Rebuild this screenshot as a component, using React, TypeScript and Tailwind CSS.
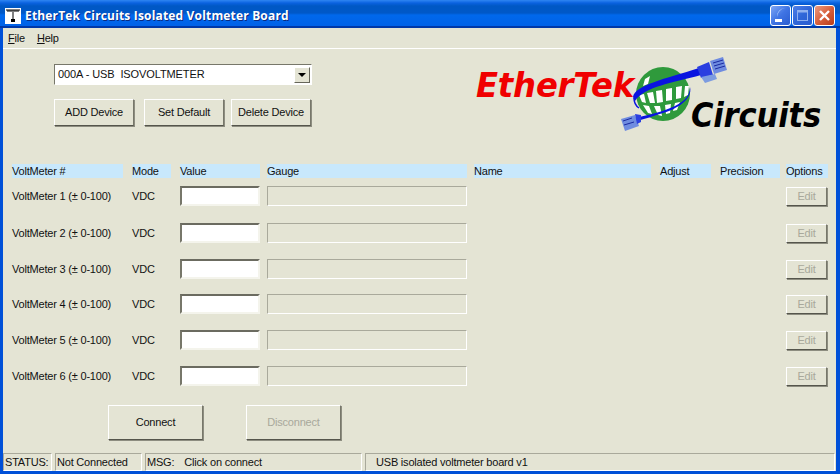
const uiFont = "font-['Liberation_Sans',Arial,sans-serif] text-[11px] tracking-[-0.2px] leading-none text-[#111]";

const headers = [
  { label: "VoltMeter #", cell: "w-[120px]", bar: "w-[111px]" },
  { label: "Mode", cell: "w-[48px]", bar: "w-[39px]" },
  { label: "Value", cell: "w-[87px]", bar: "w-[80px]" },
  { label: "Gauge", cell: "w-[207px]", bar: "w-[200px]" },
  { label: "Name", cell: "w-[186px]", bar: "w-[177px]" },
  { label: "Adjust", cell: "w-[60px]", bar: "w-[51px]" },
  { label: "Precision", cell: "w-[66px]", bar: "w-[60px]" },
  { label: "Options", cell: "w-[42px]", bar: "w-[42px]" },
];

const rows = [
  { id: 1, gap: "mt-[8px]" },
  { id: 2, gap: "mt-[17px]" },
  { id: 3, gap: "mt-[16px]" },
  { id: 4, gap: "mt-[15px]" },
  { id: 5, gap: "mt-[16px]" },
  { id: 6, gap: "mt-[16px]" },
];

function Btn({ label, className, disabled }: { label: string; className: string; disabled?: boolean }) {
  return (
    <div
      className={`flex items-center justify-center bg-[#e4e4d4] border border-t-[#fff] border-l-[#fff] border-r-[#77776a] border-b-[#55554c] shadow-[1px_1px_0_#8d8d80] ${
        disabled ? "text-[#a8a89b]" : ""
      } ${className}`}
    >
      {label}
    </div>
  );
}

function TitleButton({ kind }: { kind: "min" | "max" | "close" }) {
  const bg =
    kind === "close"
      ? "bg-gradient-to-br from-[#e89a80] via-[#d8603c] to-[#b83c18]"
      : kind === "min"
        ? "bg-gradient-to-br from-[#7fa6f4] via-[#3f74e4] to-[#2a5cd0]"
        : "bg-gradient-to-br from-[#4f80e8] via-[#2f66d8] to-[#2a5cd0]";
  return (
    <div className={`relative w-[21px] h-[21px] rounded-[3px] border border-white ${bg}`}>
      <svg viewBox="0 0 19 19" className="w-full h-full">
        {kind === "min" && (
          <>
            <path d="M14 2 A8 8 0 0 0 6 11 A10 10 0 0 1 14 2 Z" fill="#a9c4f8" />
            <rect x="4" y="13" width="7" height="3" fill="#fff" />
          </>
        )}
        {kind === "max" && (
          <>
            <rect x="4.5" y="4.5" width="10" height="10" fill="none" stroke="#8fb0ef" strokeWidth="1" />
            <rect x="4" y="4" width="11" height="2.5" fill="#8fb0ef" />
          </>
        )}
        {kind === "close" && <path d="M5 5 L14 14 M14 5 L5 14" stroke="#fff" strokeWidth="2.4" />}
      </svg>
    </div>
  );
}

function Logo() {
  return (
    <svg viewBox="0 0 360 90" className="w-[360px] h-[90px] overflow-visible">
      <text
        x="7"
        y="42"
        fill="#f00000"
        fontFamily="'DejaVu Sans', sans-serif"
        fontWeight="700"
        fontStyle="italic"
        fontSize="34"
        textLength="158"
        lengthAdjust="spacingAndGlyphs"
      >
        EtherTek
      </text>
      <text
        x="222"
        y="72"
        fill="#000"
        fontFamily="'DejaVu Sans', sans-serif"
        fontWeight="700"
        fontStyle="italic"
        fontSize="33"
        textLength="130"
        lengthAdjust="spacingAndGlyphs"
      >
        Circuits
      </text>
      {/* globe */}
      <circle cx="194" cy="39" r="27" fill="#2f9a3c" />
      <g fill="#fff">
        <path d="M176 24 l5 -3 l-2 8 l-5 2 Z" />
        <path d="M187 36 l6 -1 l1 12 l-6 1 Z" />
        <path d="M178 38 l6 -1 l2 11 l-5 0 Z" />
        <path d="M170 40 l5 -1 l2 9 l-4 -1 Z" />
        <path d="M197 34 l6 -1 l0 12 l-6 1 Z" />
        <path d="M207 32 l6 -1 l-1 12 l-5 1 Z" />
        <path d="M216 31 l4 0 l-1 9 l-4 2 Z" />
        <path d="M174 50 l6 1 l3 8 l-4 -1 Z" />
        <path d="M185 51 l6 0 l2 10 l-4 -1 Z" />
        <path d="M196 50 l6 -1 l-1 9 l-4 1 Z" />
        <path d="M206 48 l5 -1 l-3 8 l-4 1 Z" />
      </g>
      {/* cable */}
      <path d="M164 42 C166 30 196 24 230 13 L232 20 C204 28 176 31 166 46 Z" fill="#0a14e0" />
      <path d="M221 32 C224 44 208 54 194 58 C184 61 176 64 168 66 L166 63 C180 60 196 56 206 51 C216 46 221 40 221 32 Z" fill="#0a14e0" />
      <path d="M165 43 C165 48 167 51 170 53" fill="none" stroke="#0a14e0" strokeWidth="1.5" />
      {/* plugs */}
      <g>
        <path d="M228 12 L240 7 L244 20 L232 23 Z" fill="#2a3ee0" />
        <path d="M232 22 L246 19 L248 24 L236 28 Z" fill="#7d9ce0" />
        <path d="M241 6 L254 2 L258 15 L245 19 Z" fill="#6f8ce0" />
        <path d="M244 8 L254 5 M245 11 L255 8 M246 14 L256 11" stroke="#1a2aa0" strokeWidth="1" />
      </g>
      <g>
        <path d="M152 64 L166 60 L170 71 L156 76 Z" fill="#6f8ce0" />
        <path d="M154 66 L163 63 M155 70 L165 67" stroke="#1a2aa0" strokeWidth="1" />
        <path d="M166 59 L172 60 L172 67 L168 69 Z" fill="#2a3ee0" />
      </g>
    </svg>
  );
}

function Sunken({ className, children }: { className: string; children?: React.ReactNode }) {
  return (
    <div className={`flex items-center h-[18px] border border-t-[#a9a99b] border-l-[#a9a99b] border-r-[#fff] border-b-[#fff] ${className}`}>
      {children}
    </div>
  );
}

export default function App() {
  return (
    <div className={`w-[840px] h-[474px] overflow-hidden flex flex-col bg-[#0050d8] ${uiFont}`}>
      <div className="h-[28px] shrink-0 flex items-center pl-[5px] pr-[5px] pt-[5px] border-b-[2px] border-[#0038a8] bg-[linear-gradient(#2f86f2_0px,#0a62e0_3px,#0058c4_6px,#0058c8_13px,#0068ec_15px,#0062e8_100%)]">
        <svg viewBox="0 0 16 16" className="w-[16px] h-[16px] shrink-0">
          <rect width="16" height="16" fill="#fff" />
          <path d="M1 2 H15 M3 2 V4 M5 2 V4 M7 2 V4 M9 2 V4 M11 2 V4 M13 2 V4" stroke="#000" strokeWidth="1" />
          <path d="M8 4 V11" stroke="#000" strokeWidth="1" />
          <rect x="6" y="11" width="4" height="3" fill="#000" />
        </svg>
        <span className="ml-[4px] font-['Open_Sans',sans-serif] font-bold text-[12px] tracking-[0.17px] text-white [text-shadow:1px_1px_0_#0a2a80]">
          EtherTek Circuits Isolated Voltmeter Board
        </span>
        <div className="ml-auto flex gap-[1px]">
          <TitleButton kind="min" />
          <TitleButton kind="max" />
          <TitleButton kind="close" />
        </div>
      </div>

      <div className="flex-1 min-h-0 mx-[3px] mr-[4px] mb-[3px] flex flex-col bg-[#e4e4d4]">
        <div className="h-[20px] shrink-0 flex items-center gap-[12px] pl-[5px] border-b border-white box-content pb-0">
          <span>
            <span className="underline">F</span>ile
          </span>
          <span>
            <span className="underline">H</span>elp
          </span>
        </div>

        <div className="h-[115px] shrink-0 flex pl-[51px]">
          <div className="w-[258px] pt-[15px]">
            <div className="h-[21px] flex items-center bg-white border border-t-[#77776a] border-l-[#77776a] border-r-[#fff] border-b-[#fff] pl-[3px] pr-[1px]">
              <span className="tracking-[-0.1px]">000A - USB &nbsp;ISOVOLTMETER</span>
              <div className="ml-auto w-[16px] h-[16px] flex items-center justify-center bg-[#e4e4d4] border border-t-white border-l-white border-r-[#66665a] border-b-[#66665a]">
                <div className="w-0 h-0 border-x-[4px] border-x-transparent border-t-[4px] border-t-black" />
              </div>
            </div>
            <div className="flex mt-[14px]">
              <Btn label="ADD Device" className="w-[80px] h-[27px]" />
              <Btn label="Set Default" className="w-[80px] h-[27px] ml-[10px]" />
              <Btn label="Delete Device" className="w-[80px] h-[27px] ml-[7px]" />
            </div>
          </div>
          <div className="ml-[157px] pt-[6px]">
            <Logo />
          </div>
        </div>

        <div className="flex pl-[9px] shrink-0">
          {headers.map((h) => (
            <div key={h.label} className={h.cell}>
              <div className={`h-[14px] flex items-center bg-[#c8e8fc] ${h.bar}`}>{h.label}</div>
            </div>
          ))}
        </div>

        {rows.map((r) => (
          <div key={r.id} className={`flex items-center pl-[9px] h-[20px] shrink-0 ${r.gap}`}>
            <div className="w-[120px]">VoltMeter {r.id} (± 0-100)</div>
            <div className="w-[48px]">VDC</div>
            <div className="w-[87px]">
              <div className="w-[80px] h-[20px] bg-white border-2 border-t-[#6b6b60] border-l-[#77776a] border-r-[#f4f4ec] border-b-[#f4f4ec]" />
            </div>
            <div className="w-[519px]">
              <div className="w-[200px] h-[20px] border border-t-[#a9a99b] border-l-[#a9a99b] border-r-[#fff] border-b-[#fff]" />
            </div>
            <Btn label="Edit" disabled className="w-[41px] h-[19px]" />
          </div>
        ))}

        <div className="flex pl-[105px] mt-[19px] shrink-0">
          <Btn label="Connect" className="w-[95px] h-[35px]" />
          <Btn label="Disconnect" disabled className="w-[95px] h-[35px] ml-[43px]" />
        </div>

        <div className="flex mt-[13px] gap-[3px] shrink-0">
          <Sunken className="w-[49px] pl-[1px]">STATUS:</Sunken>
          <Sunken className="w-[87px] pl-[1px]">Not Connected</Sunken>
          <Sunken className="w-[217px] pl-[1px]">
            <span>MSG:</span>
            <span className="ml-[10px]">Click on connect</span>
          </Sunken>
          <Sunken className="w-[470px] pl-[10px]">USB isolated voltmeter board v1</Sunken>
        </div>
      </div>
    </div>
  );
}
